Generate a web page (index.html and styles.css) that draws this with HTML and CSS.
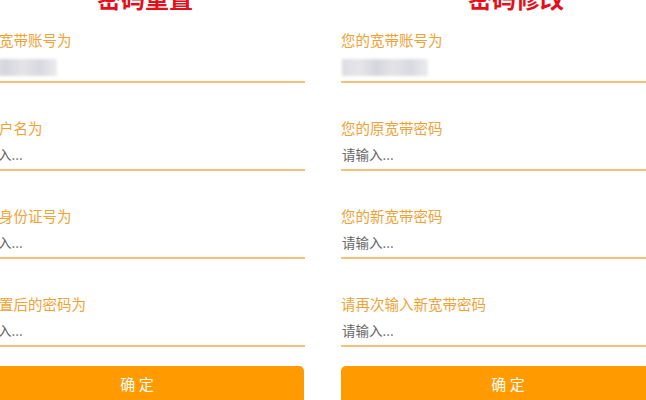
FILE: index.html
```html
<!DOCTYPE html>
<html lang="zh-CN">
<head>
  <meta charset="UTF-8" />
  <meta name="viewport" content="width=device-width, initial-scale=1" />
  <title>宽带密码</title>
  <link rel="stylesheet" href="styles.css">
</head>
<body>
  <div class="pages">
    <div class="panel">
      <h2 class="title">密码重置</h2>
      <div class="field">
        <label>您的宽带账号为</label>
        <div class="value"><span class="masked"></span></div>
      </div>
      <div class="field">
        <label for="userName">宽带户名为</label>
        <input type="text" id="userName" placeholder="请输入..." />
      </div>
      <div class="field">
        <label for="idCard">您的身份证号为</label>
        <input type="text" id="idCard" placeholder="请输入..." />
      </div>
      <div class="field">
        <label for="resetPwd">您重置后的密码为</label>
        <input type="password" id="resetPwd" placeholder="请输入..." />
      </div>
      <button class="submit">确 定</button>
    </div>

    <div class="panel">
      <h2 class="title">密码修改</h2>
      <div class="field">
        <label>您的宽带账号为</label>
        <div class="value"><span class="masked"></span></div>
      </div>
      <div class="field">
        <label for="oldPwd">您的原宽带密码</label>
        <input type="password" id="oldPwd" placeholder="请输入..." />
      </div>
      <div class="field">
        <label for="newPwd">您的新宽带密码</label>
        <input type="password" id="newPwd" placeholder="请输入..." />
      </div>
      <div class="field">
        <label for="newPwd2">请再次输入新宽带密码</label>
        <input type="password" id="newPwd2" placeholder="请输入..." />
      </div>
      <button class="submit">确 定</button>
    </div>
  </div>
</body>
</html>
```

FILE: styles.css
```css
html, body {
  margin: 0;
  padding: 0;
  background: #fff;
  overflow: hidden;
  font-family: "Noto Sans CJK SC", "Noto Sans", sans-serif;
}

.pages {
  display: flex;
  gap: 37px;
  margin-left: -30px;
}

.panel {
  flex: 0 0 334px;
  width: 334px;
}

.title {
  margin: -17px 0 0;
  padding-left: 16px;
  height: 30px;
  line-height: 30px;
  font-size: 24px;
  font-weight: bold;
  text-align: center;
  color: #e3101c;
}

.field {
  margin-top: 35px;
}

.field:first-of-type {
  margin-top: 17px;
}

.field label {
  display: block;
  height: 20px;
  line-height: 20px;
  margin-bottom: 1px;
  font-size: 14.5px;
  color: #efa236;
}

.field input,
.field .value {
  display: block;
  box-sizing: content-box;
  width: 100%;
  height: 30px;
  padding: 0 0 0 1px;
  margin: 0;
  border: 0;
  border-bottom: 2px solid #f6c07a;
  outline: none;
  font-family: inherit;
  font-size: 13.5px;
  color: #333;
  background: transparent;
}

.field input::placeholder {
  color: #666;
}

.field .value {
  display: flex;
  align-items: center;
  padding-top: 2px;
  height: 28px;
}

.masked {
  display: inline-block;
  width: 86px;
  height: 17px;
  background: linear-gradient(90deg, #dcdde2 0%, #e6e6ea 20%, #d5d6db 40%, #e4e4e8 60%, #d8d9de 80%, #ececef 100%);
  filter: blur(1.5px);
}

.submit {
  display: block;
  width: 100%;
  height: 40px;
  margin-top: 19px;
  padding: 0 0 5px;
  border: none;
  border-radius: 5px;
  background-color: #ff9b00;
  color: #fff;
  font-family: inherit;
  font-size: 15px;
  cursor: pointer;
}
```
